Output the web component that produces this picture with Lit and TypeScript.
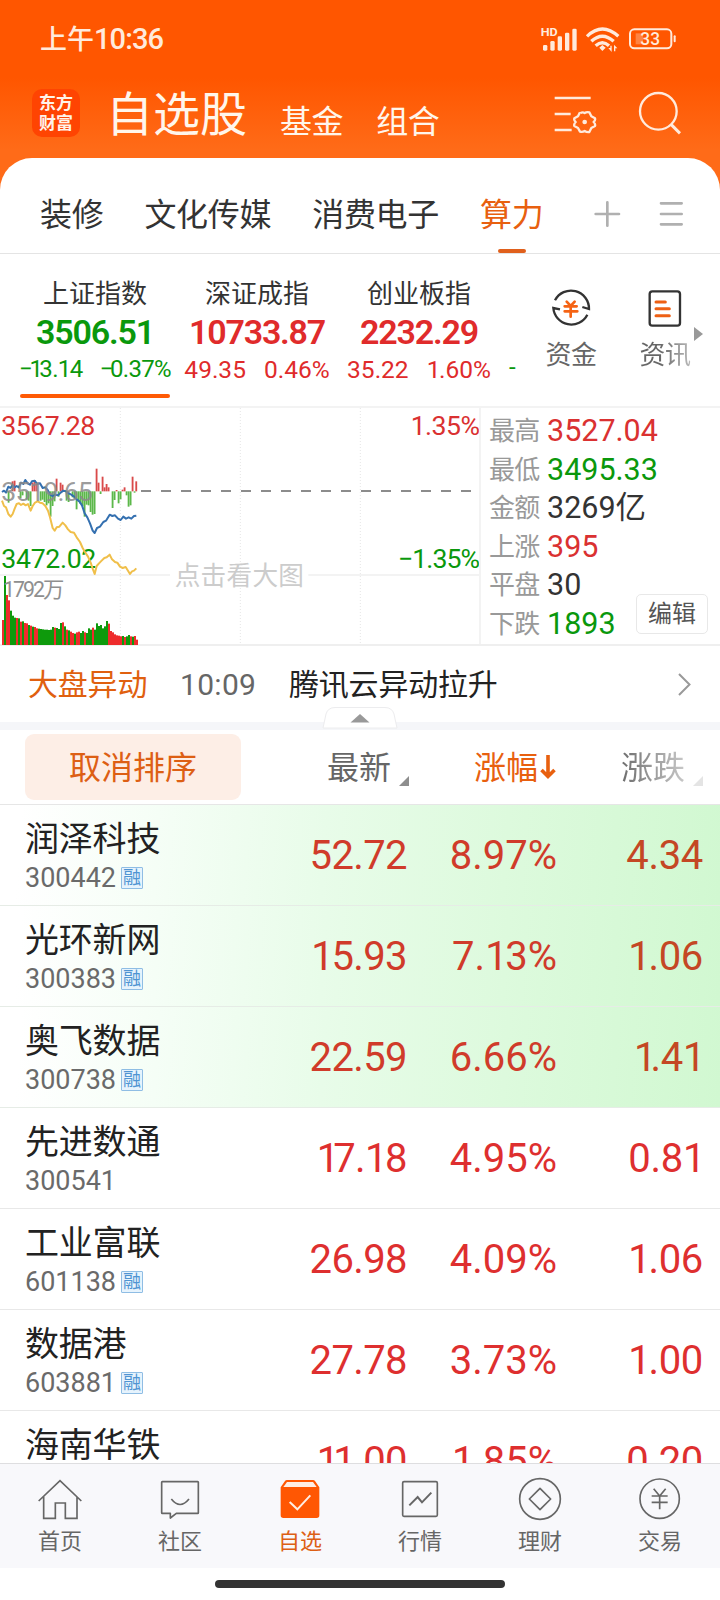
import { LitElement, html, svg, css } from "lit";
import { customElement, property } from "lit/decorators.js";
import { classMap } from "lit/directives/class-map.js";

const FONT = css`
  :host {
    font-family: Roboto, "Noto Sans CJK SC", sans-serif;
    font-weight: 400;
    box-sizing: border-box;
  }
  *,
  *::before,
  *::after {
    box-sizing: border-box;
  }
  svg {
    display: block;
    flex: none;
  }
  .one {
    letter-spacing: -0.15em;
  }
  .one:last-child {
    letter-spacing: -0.06em;
  }
  .minus {
    letter-spacing: -0.14em;
  }
`;

// Sets figures with a narrow "1" and a tight minus sign.
const figures = (s: string) =>
  (s.match(/1|−|[^1−]+/g) ?? []).map((c) =>
    c === "1" ? html`<span class="one">1</span>` : c === "−" ? html`<span class="minus">−</span>` : c
  );

@customElement("status-bar")
class StatusBar extends LitElement {
  static styles = [
    FONT,
    css`
      :host {
        display: flex;
        align-items: center;
        justify-content: space-between;
        height: 76px;
        padding: 2px 43px 0 40px;
        color: #ffeadc;
      }
      .time {
        font-size: 29px;
        line-height: 32px;
        font-weight: 500;
        letter-spacing: -0.9px;
      }
      .cjk {
        font-size: 27px;
        letter-spacing: 0;
      }
      .hd {
        font: 700 33px Roboto, sans-serif;
      }
      .pct {
        font: 500 54px Roboto, sans-serif;
      }
    `,
  ];
  render() {
    return html`
      <div class="time"><span class="cjk">上午</span>10:36</div>
      <svg width="137" height="29" viewBox="540 74 411 87" fill="#ffeadc">
        <text class="hd" x="542" y="107" textLength="51" lengthAdjust="spacingAndGlyphs">HD</text>
        ${[
          [549, 134],
          [571, 122],
          [593, 108],
          [615, 97],
          [637, 85],
        ].map(([x, y]) => svg`<rect x=${x} y=${y} width="13" height=${151 - y} rx="4" />`)}
        <g fill="none" stroke="#ffeadc" stroke-width="10" stroke-linecap="butt">
          <path d="M681 108 Q727 64 775 108" />
          <path d="M694 123 Q727 92 761 123" />
          <path d="M707 136 Q727 118 747 136" />
        </g>
        <path d="M718 142 L727 134 L737 142 L727 152Z" />
        <path d="M745 143 L751 143 L751 136 L755 136 L755 155Z M772 144 L766 144 L766 153 L762 153 L762 133Z" />
        <rect x="810" y="87" width="124" height="57" rx="13" fill="none" stroke="#ffeadc" stroke-width="6" />
        <rect x="941" y="105" width="6" height="21" rx="3" />
        <rect x="827" y="99" width="22" height="33" opacity=".3" />
        <text class="pct" x="841" y="135" textLength="59" lengthAdjust="spacingAndGlyphs">33</text>
      </svg>
    `;
  }
}

@customElement("app-header")
class AppHeader extends LitElement {
  static styles = [
    FONT,
    css`
      :host {
        display: flex;
        align-items: center;
        height: 82px;
        padding: 0 39px 8px 32px;
        color: #fff6ec;
      }
      .logo {
        width: 48px;
        height: 48px;
        border-radius: 10px;
        background: #ff4402;
        color: #fff3ea;
        font-weight: 700;
        font-size: 17px;
        line-height: 20px;
        padding-top: 4px;
        text-align: center;
        margin-top: -1px;
      }
      .title {
        font-size: 47px;
        line-height: 60px;
        margin: 4px 0 0 26px;
      }
      .link {
        font-size: 32px;
        line-height: 40px;
        letter-spacing: -0.4px;
        margin: 17px 0 0 33px;
      }
      .settings {
        margin-left: auto;
      }
      .search {
        margin-left: 41px;
      }
    `,
  ];
  render() {
    return html`
      <div class="logo">东方<br />财富</div>
      <div class="title">自选股</div>
      <div class="link">基金</div>
      <div class="link">组合</div>
      <svg class="settings" width="43" height="44" viewBox="580 270 129 132" fill="none" stroke="#ffeadc" stroke-width="7">
        <path d="M582 291H690 M582 339H630 M582 387H633" />
        <path
          stroke-linejoin="round"
          d="M660 336 Q666 332 672 336 Q678 332 686 334 L692 346 L703 352 Q705 358 699 363 Q705 369 703 375 L692 381 L686 393 Q678 394 672 390 Q666 394 658 392 L652 381 L641 375 Q639 369 645 363 Q639 357 641 352 L652 346 L658 334"
        />
        <circle cx="672" cy="363" r="7" fill="#ffeadc" stroke="none" />
      </svg>
      <svg class="search" width="43" height="44" viewBox="834 272 129 132" fill="none" stroke="#ffeadc" stroke-width="7">
        <circle cx="895" cy="333" r="55" />
        <path d="M933 372L960 399" stroke-width="9" />
      </svg>
    `;
  }
}

@customElement("group-tabs")
class GroupTabs extends LitElement {
  static styles = [
    FONT,
    css`
      :host {
        display: flex;
        height: 96px;
        padding: 0 36px 0 40px;
        border-bottom: 1px solid #e4e4e4;
        background: #fff;
        border-radius: 32px 32px 0 0;
        color: #333;
        font-size: 32px;
      }
      .tab {
        display: flex;
        flex-direction: column;
        align-items: center;
        margin-right: 41px;
        height: 95px;
        padding-top: 10px;
        line-height: 95px;
        letter-spacing: -0.3px;
      }
      .tab > span {
        height: 81px;
      }
      .on {
        color: #e8600f;
      }
      .on::after {
        content: "";
        width: 28px;
        height: 4px;
        border-radius: 2px;
        background: #e0601c;
      }
      .tools {
        margin: 42px 0 0 auto;
      }
    `,
  ];
  render() {
    return html`
      ${["装修", "文化传媒", "消费电子", "算力"].map(
        (t, i) => html`<div class=${classMap({ tab: true, on: i === 3 })}><span>${t}</span></div>`
      )}
      <svg class="tools" width="90" height="28" viewBox="704 598 270 84" fill="none" stroke="#b0b0b0" stroke-width="8" stroke-linecap="round">
        <path d="M709 640H779 M744 605V675 M905 608H967 M905 640H967 M905 671H967" />
      </svg>
    `;
  }
}

const INDICES = [
  { name: "上证指数", value: "3506.51", diff: "−13.14", pct: "−0.37%", down: true, on: true },
  { name: "深证成指", value: "10733.87", diff: "49.35", pct: "0.46%" },
  { name: "创业板指", value: "2232.29", diff: "35.22", pct: "1.60%" },
];

@customElement("index-strip")
class IndexStrip extends LitElement {
  static styles = [
    FONT,
    css`
      :host {
        display: flex;
        height: 152px;
        background: #fff;
        padding-left: 14px;
      }
      .idx {
        width: 162px;
        display: flex;
        flex-direction: column;
        align-items: center;
        color: #e02b2b;
        padding-top: 20px;
      }
      .down {
        color: #0a980c;
      }
      .name {
        color: #333;
        font-size: 26px;
        line-height: 40px;
      }
      .value {
        font-size: 34px;
        line-height: 36px;
        font-weight: 600;
        letter-spacing: -1.2px;
      }
      .change {
        display: flex;
        gap: 18px;
        font-size: 24.5px;
        line-height: 39px;
        letter-spacing: 0;
        white-space: nowrap;
      }
      .down .change {
        font-size: 24px;
        letter-spacing: -0.7px;
        gap: 17px;
      }
      .down .minus {
        letter-spacing: -0.14em;
      }
      .on::after {
        content: "";
        width: 150px;
        height: 4px;
        border-radius: 2px;
        background: #ff5a05;
        margin-top: 5px;
      }
      .next {
        width: 18px;
        padding: 96px 0 0 9px;
        color: #0a980c;
        font-size: 24px;
        line-height: 34px;
      }
      .tool {
        width: 94px;
        display: flex;
        flex-direction: column;
        align-items: center;
        padding-top: 34px;
        font-size: 26px;
        color: #666;
      }
      .first {
        margin-left: 6px;
      }
      .tool span {
        line-height: 40px;
        margin-top: 7px;
        letter-spacing: -0.5px;
      }
      .fade {
        background: linear-gradient(90deg, #666 40%, #bbb);
        background-clip: text;
        -webkit-background-clip: text;
        color: transparent;
      }
      .more {
        margin: 73px 0 0 -18px;
      }
    `,
  ];
  render() {
    return html`
      ${INDICES.map(
        (d) => html`<div class=${classMap({ idx: true, down: !!d.down, on: !!d.on })}>
          <div class="name">${d.name}</div>
          <div class="value">${d.value}</div>
          <div class="change"><span>${figures(d.diff)}</span><span>${figures(d.pct)}</span></div>
        </div>`
      )}
      <div class="next">-</div>
      <div class="tool first">
        <svg width="42" height="40" viewBox="570 83 126 120" fill="none" stroke="#333" stroke-width="7">
          <path d="M585 120 A54 54 0 0 1 687 146 L667 140 M682 163 A54 54 0 0 1 580 143 L600 147" />
          <path stroke="#f56314" stroke-width="8" stroke-linecap="round" d="M620 124L632 137L644 124 M632 138V169 M614 138H650 M614 153H652" />
        </svg>
        <span>资金</span>
      </div>
      <div class="tool">
        <svg width="36" height="40" viewBox="862 83 108 120" fill="none" stroke="#333" stroke-width="7">
          <rect x="870" y="93" width="91" height="103" rx="8" />
          <path stroke="#ee6014" stroke-width="9" stroke-linecap="round" d="M889 125H917 M889 145H929 M889 166H929" />
        </svg>
        <span class="fade">资讯</span>
      </div>
      <svg class="more" width="9" height="14" viewBox="0 0 9 14"><path d="M0 0L9 7L0 14Z" fill="#999" /></svg>
    `;
  }
}

// Coordinates inside the intraday chart use three units for every CSS pixel.
const VOLUME: [number, string][] = [
  [75, "r"], [207, "g"], [150, "r"], [134, "r"], [103, "g"], [88, "g"], [82, "g"], [81, "r"], [80, "g"], [70, "r"],
  [71, "g"], [66, "r"], [65, "r"], [60, "g"], [58, "r"], [55, "g"], [54, "r"], [50, "r"], [49, "g"], [48, "g"],
  [47, "g"], [46, "g"], [46, "g"], [45, "g"], [46, "g"], [54, "g"], [52, "r"], [51, "g"], [48, "g"], [66, "g"],
  [68, "r"], [56, "g"], [46, "r"], [44, "g"], [40, "r"], [36, "r"], [34, "g"], [38, "r"], [40, "r"], [36, "g"],
  [42, "g"], [38, "r"], [36, "g"], [50, "g"], [46, "g"], [52, "r"], [46, "g"], [65, "g"], [57, "g"], [60, "g"],
  [50, "g"], [56, "g"], [72, "g"], [64, "r"], [42, "r"], [38, "r"], [32, "r"], [29, "r"], [28, "r"], [26, "r"],
  [27, "g"], [24, "r"], [26, "g"], [30, "g"], [26, "r"], [25, "g"], [27, "r"], [16, "r"],
];

const FLOW: [number, number][] = [
  [26, -34], [38, 30], [44, 32], [62, -20], [68, -12], [80, -24], [86, -28], [92, -44], [98, 26], [104, 34],
  [110, 22], [122, -28], [128, -25], [134, -32], [140, -42], [146, -36], [152, -76], [158, -44], [164, -30], [170, 38],
  [176, -16], [182, 26], [188, 20], [200, -28], [206, -32], [218, -18], [224, -22], [230, -54], [236, -30], [242, -38],
  [248, -44], [254, -76], [260, -40], [266, -42], [272, -62], [278, -70], [284, -68], [290, 68], [296, 26], [302, -8],
  [308, 44], [314, 12], [320, 22], [326, 12], [338, -50], [344, -26], [350, 4], [356, -36], [362, -24], [368, 5],
  [374, 12], [380, -12], [386, -46], [392, -42], [398, 44], [404, -4], [409, 30],
];

const AVERAGE =
  "6,276 12,272 18,278 25,260 31,264 37,256 44,262 50,258 56,262 63,248 70,252 76,240 83,250 90,254 96,244 104,242 112,252 120,250 128,264 136,262 143,270 150,284 158,288 166,284 174,286 182,278 190,272 198,274 206,280 214,284 222,290 230,298 238,304 246,316 254,340 262,352 270,370 278,392 284,399 291,384 300,380 310,366 318,362 329,344 337,348 345,346 354,356 362,360 370,350 378,356 386,352 394,356 402,348 409,347";
const PRICE =
  "6,302 12,318 18,322 25,342 32,350 38,342 44,326 50,312 57,310 63,315 70,311 77,316 84,312 92,332 98,318 105,308 113,304 120,308 128,310 136,318 144,332 150,352 158,384 164,392 170,382 178,380 188,368 196,376 204,388 212,396 222,398 230,412 240,426 248,444 256,458 264,470 272,488 278,506 284,522 290,498 297,490 305,482 313,474 320,472 329,464 336,478 345,486 352,488 360,500 368,504 377,501 384,512 390,522 396,514 402,512 409,505";

@customElement("market-overview")
class MarketOverview extends LitElement {
  static styles = [
    FONT,
    css`
      :host {
        display: flex;
        height: 240px;
        background: #fff;
        border-bottom: 2px solid #efefef;
      }
      .num {
        font: 400 80px Roboto, sans-serif;
      }
      .vol {
        font: 400 64px Roboto, "Noto Sans CJK SC", sans-serif;
      }
      .hint {
        font: 400 77px "Noto Sans CJK SC", sans-serif;
      }
      .side {
        flex: 1;
        display: flex;
        border-top: 2px solid #f3f3f3;
        border-left: 2px solid #f3f3f3;
        padding: 4px 12px 0 8px;
        justify-content: space-between;
      }
      .list {
        display: grid;
        grid-template-columns: 58px auto;
        grid-auto-rows: 38.5px;
        line-height: 38px;
        font-size: 30.5px;
        white-space: nowrap;
        color: #333;
      }
      .label {
        font-size: 26px;
        color: #999;
        letter-spacing: -0.7px;
      }
      .up {
        color: #da3131;
      }
      .down {
        color: #0a980c;
      }
      .edit {
        align-self: flex-end;
        margin: 0 0 10px -30px;
        width: 72px;
        height: 40px;
        border: 1px solid #e8e8e8;
        border-radius: 5px;
        font-size: 24px;
        line-height: 39px;
        text-align: center;
        color: #555;
      }
    `,
  ];
  render() {
    const rows = [
      ["最高", "3527.04", "up"],
      ["最低", "3495.33", "down"],
      ["金额", "3269亿", ""],
      ["上涨", "395", "up"],
      ["平盘", "30", ""],
      ["下跌", "1893", "down"],
    ];
    const palette: Record<string, string> = { r: "#ee2c2c", g: "#0e9a0c" };
    return html`
      <svg width="479" height="239" viewBox="0 18 1437 717" fill="none">
        <path d="M0 21H1440" stroke="#f3f3f3" stroke-width="6" />
        <path d="M0 525H510 M925 525H1440" stroke="#efefef" stroke-width="5" />
        <path d="M361 24V735 M721 24V735 M1081 24V735" stroke="#e6e6e6" stroke-width="3" stroke-dasharray="3 6" />
        <path d="M423 273H1415" stroke="#8c8c8c" stroke-width="6" stroke-dasharray="30 30" />
        ${FLOW.map(
          ([x, h]) =>
            svg`<rect x=${x - 3} y=${h > 0 ? 274 - h : 274} width="5.5" height=${Math.abs(h)} fill=${h > 0 ? "#d94a4a" : "#5cb84a"} />`
        )}
        ${VOLUME.map(
          ([h, c], i) => svg`<rect x=${6 + i * 6} y=${735 - h} width="6" height=${h} fill=${palette[c]} />`
        )}
        <text class="num" x="4" y="105" fill="#da3131" textLength="282">3567.28</text>
        <text class="num" x="4" y="504" fill="#0a980c" textLength="285">3472.02</text>
        <text class="num" x="1440" y="105" fill="#da3131" text-anchor="end" textLength="208">1.35%</text>
        <text class="num" x="1440" y="503" fill="#0a980c" text-anchor="end" textLength="246">−1.35%</text>
        <text class="vol" x="9" y="592" fill="#8f8f8f" textLength="184">1792万</text>
        <text class="hint" x="524" y="555" fill="#ccc" textLength="388">点击看大图</text>
        <polyline points=${PRICE} stroke="#f0bf4a" stroke-width="6" stroke-linejoin="round" />
        <polyline points=${AVERAGE} stroke="#3470b0" stroke-width="6" stroke-linejoin="round" />
        <text class="num" x="4" y="303" fill="#8a8a8a" fill-opacity=".85" textLength="274">3519.65</text>
      </svg>
      <div class="side">
        <div class="list">
          ${rows.map(([l, v, c]) => html`<span class="label">${l}</span><span class=${c}>${v}</span>`)}
        </div>
        <div class="edit">编辑</div>
      </div>
    `;
  }
}

@customElement("news-line")
class NewsLine extends LitElement {
  static styles = [
    FONT,
    css`
      :host {
        display: flex;
        position: relative;
        height: 84px;
        padding: 0 29px 8px 28px;
        border-bottom: 8px solid #f5f6f9;
        background: #fff;
        font-size: 30px;
        line-height: 77px;
        letter-spacing: -0.2px;
        color: #222;
      }
      .tag {
        color: #e0600f;
        width: 152px;
      }
      .time {
        color: #666;
        width: 109px;
        letter-spacing: 0.3px;
      }
      .go {
        margin: 26px 0 0 auto;
      }
      .handle {
        position: absolute;
        left: 322px;
        top: 60px;
      }
    `,
  ];
  render() {
    return html`
      <span class="tag">大盘异动</span>
      <span class="time">10:09</span>
      <span>腾讯云异动拉升</span>
      <svg class="go" width="13" height="24" viewBox="0 0 13 24" fill="none" stroke="#999" stroke-width="2">
        <path d="M1 2L11.5 12.5L1 23" />
      </svg>
      <svg class="handle" width="76" height="24" viewBox="0 0 76 24">
        <path d="M1 22L4 8Q6 1.500 13 1.500H63Q70 1.500 72 8L75 22Z" fill="#fff" stroke="#ececee" stroke-width="1" />
        <path d="M28.500 16.500L38 8L47.500 16.500Z" fill="#999" />
      </svg>
    `;
  }
}

const STOCKS = [
  { name: "润泽科技", code: "300442", margin: true, v: ["52.72", "8.97%", "4.34"], lit: true },
  { name: "光环新网", code: "300383", margin: true, v: ["15.93", "7.13%", "1.06"], lit: true },
  { name: "奥飞数据", code: "300738", margin: true, v: ["22.59", "6.66%", "1.41"], lit: true },
  { name: "先进数通", code: "300541", margin: false, v: ["17.18", "4.95%", "0.81"], lit: false },
  { name: "工业富联", code: "601138", margin: true, v: ["26.98", "4.09%", "1.06"], lit: false },
  { name: "数据港", code: "603881", margin: true, v: ["27.78", "3.73%", "1.00"], lit: false },
  { name: "海南华铁", code: "", margin: false, v: ["11.00", "1.85%", "0.20"], lit: false },
];

@customElement("stock-row")
class StockRow extends LitElement {
  @property({ attribute: false }) stock!: (typeof STOCKS)[number];
  static styles = [
    FONT,
    css`
      :host {
        display: block;
      }
      .row {
        display: grid;
        grid-template-columns: 222px 160px 150px 146px;
        height: 101px;
        padding-left: 25px;
        border-bottom: 1px solid #e8e8e8;
        background: #fff;
      }
      .lit {
        background: linear-gradient(94deg, #fff 3%, #f5fef6 22%, #e8fce9 45%, #ddfadd 70%, #d1f8d1 100%);
        border-bottom-color: #e6ece6;
      }
      .name {
        font-size: 34px;
        line-height: 44px;
        padding-top: 12px;
        letter-spacing: -0.2px;
        color: #222;
      }
      .code {
        display: flex;
        align-items: center;
        gap: 5px;
        font-size: 27px;
        line-height: 34px;
        color: #6a6a6a;
      }
      .badge {
        width: 22px;
        height: 22px;
        border: 1px solid #8fbde4;
        border-radius: 1px;
        background: #e6f3fd;
        color: #4f94d2;
        font-size: 18px;
        line-height: 20px;
        display: flex;
        justify-content: center;
      }
      .val {
        font-size: 40px;
        line-height: 102px;
        text-align: right;
        letter-spacing: -0.3px;
        color: #de2f2f;
      }
      .val:nth-child(2) {
        letter-spacing: -0.6px;
      }
      .val:nth-child(3) {
        letter-spacing: 0;
      }
      .val .one {
        letter-spacing: -0.15em;
      }
      .val .one:last-child {
        letter-spacing: -0.06em;
      }
      .lit .val {
        color: #d03b2a;
      }
      .lit .val:last-child {
        color: #c44724;
      }
    `,
  ];
  render() {
    const s = this.stock;
    return html`<div class=${classMap({ row: true, lit: s.lit })}>
      <div>
        <div class="name">${s.name}</div>
        <div class="code"><span>${s.code}</span>${s.margin ? html`<span class="badge">融</span>` : ""}</div>
      </div>
      ${s.v.map((v) => html`<div class="val">${figures(v)}</div>`)}
    </div>`;
  }
}

@customElement("stock-list")
class StockList extends LitElement {
  static styles = [
    FONT,
    css`
      :host {
        display: flex;
        flex-direction: column;
        flex: 1;
        min-height: 0;
        overflow: hidden;
        background: #fff;
      }
      .head {
        display: flex;
        flex: none;
        height: 75px;
        padding: 4px 17px 0 25px;
        border-bottom: 1px solid #e6e6e6;
        font-size: 32px;
        line-height: 68px;
        color: #666;
      }
      .cancel {
        width: 216px;
        height: 66px;
        border-radius: 9px;
        background: #fdeee6;
        color: #dd5f14;
        text-align: center;
      }
      .col {
        display: flex;
      }
      .latest {
        margin-left: 86px;
      }
      .corner {
        margin: 42px 0 0 8px;
      }
      .rise {
        margin-left: 65px;
        color: #e8600f;
      }
      .arrow {
        margin: 20px 0 0 2px;
      }
      .delta {
        margin-left: auto;
      }
      .delta > span {
        background: linear-gradient(90deg, #6d6d6d, #c8c8c8);
        -webkit-background-clip: text;
        background-clip: text;
        color: transparent;
      }
    `,
  ];
  render() {
    const corner = (c: string) =>
      html`<svg class="corner" width="10" height="10" viewBox="0 0 10 10"><path d="M10 0V10H0Z" fill=${c} /></svg>`;
    return html`
      <div class="head">
        <div class="cancel">取消排序</div>
        <div class="col latest"><span>最新</span>${corner("#8e8e8e")}</div>
        <div class="col rise">
          <span>涨幅</span>
          <svg class="arrow" width="16" height="26" viewBox="0 0 16 26" fill="none" stroke="#e8600f" stroke-width="3.6">
            <path d="M8 1V22 M1.500 16L8 22.500L14.500 16" />
          </svg>
        </div>
        <div class="col delta"><span>涨跌</span>${corner("#e4e4e4")}</div>
      </div>
      ${STOCKS.map((s) => html`<stock-row .stock=${s}></stock-row>`)}
    `;
  }
}

const TABS = [
  {
    label: "首页",
    icon: svg`<path d="M116 363L180 302L244 363 M131 350V415H166V369H196V415H231V350" />`,
  },
  {
    label: "社区",
    icon: svg`<path stroke-linejoin="round" d="M127 305H233Q235 305 235 307V398Q235 400 233 400H169L151 414V400H127Q125 400 125 398V307Q125 305 127 305Z" /><path d="M154 357Q180 390 207 357" />`,
  },
  {
    label: "自选",
    icon: svg`<path fill="#ff5703" stroke="none" d="M141 300H219Q223 300 225 303L238 322V406Q238 414 230 414H130Q122 414 122 406V322L135 303Q137 300 141 300Z" /><path fill="#ffeee4" stroke="none" d="M141 306H219L230 321H130Z" /><path stroke="#ffeee4" stroke-width="6" d="M149 366L172 388L211 346" />`,
  },
  {
    label: "行情",
    icon: svg`<rect x="128" y="305" width="104" height="104" rx="4" /><path d="M148 376L173 351L186 367L214 338" stroke-width="6" />`,
  },
  {
    label: "理财",
    icon: svg`<circle cx="180" cy="357" r="61" /><path stroke-linejoin="round" d="M180 325L212 357L180 389L148 357Z" />`,
  },
  {
    label: "交易",
    icon: svg`<circle cx="179" cy="356" r="59" /><path d="M161 326L179 348L197 326 M179 348V388 M155 348H203 M155 367H203" />`,
  },
];

@customElement("bottom-nav")
class BottomNav extends LitElement {
  static styles = [
    FONT,
    css`
      :host {
        display: block;
        flex: none;
        height: 137px;
        background: #fff;
      }
      .bar {
        display: grid;
        grid-template-columns: repeat(6, 120px);
        height: 105px;
        border-top: 1px solid #dedee0;
        background: #f8f8fb;
      }
      .item {
        display: flex;
        flex-direction: column;
        align-items: center;
        padding-top: 12px;
        font-size: 22px;
        line-height: 30px;
        color: #666;
      }
      .item span {
        margin-top: 5px;
      }
      .on {
        color: #dd5f14;
      }
      .home {
        width: 290px;
        height: 8px;
        margin: 12px auto 0;
        border-radius: 4px;
        background: #333;
      }
    `,
  ];
  render() {
    return html`
      <div class="bar">
        ${TABS.map(
          (t, i) => html`<div class=${classMap({ item: true, on: i === 2 })}>
            <svg width="44" height="46" viewBox="114 288 132 138" fill="none" stroke="#666" stroke-width="5">${t.icon}</svg>
            <span>${t.label}</span>
          </div>`
        )}
      </div>
      <div class="home"></div>
    `;
  }
}

@customElement("app-root")
class AppRoot extends LitElement {
  static styles = [
    FONT,
    css`
      :host {
        display: flex;
        flex-direction: column;
        width: 720px;
        height: 1600px;
        overflow: hidden;
        background: linear-gradient(#ff5600 0, #ff5600 78px, #ff6b18 150px, #ff6b18 200px, #fff 200px);
      }
    `,
  ];
  render() {
    return html`
      <status-bar></status-bar>
      <app-header></app-header>
      <group-tabs></group-tabs>
      <index-strip></index-strip>
      <market-overview></market-overview>
      <news-line></news-line>
      <stock-list></stock-list>
      <bottom-nav></bottom-nav>
    `;
  }
}
